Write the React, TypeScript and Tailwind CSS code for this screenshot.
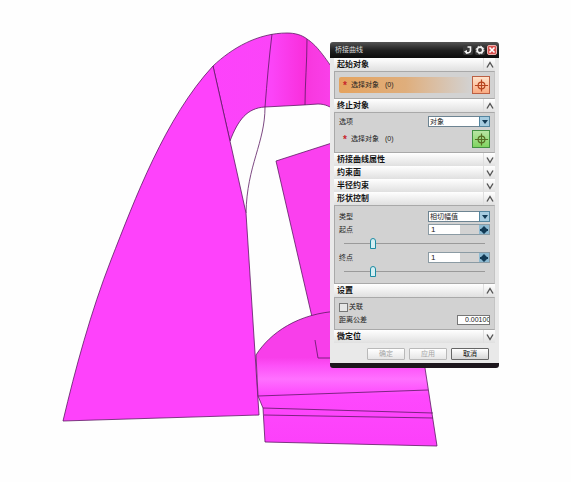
import type { ReactNode } from "react";

function ModelView() {
  return (
    <svg
      className="block h-[482px] w-[571px]"
      viewBox="0 0 571 482"
      strokeWidth="0.8"
      stroke="#5c1a62"
      fill="none"
      aria-hidden="true"
    >
      <defs>
        <linearGradient id="arch" x1="213" x2="330" y1="0" y2="0" gradientUnits="userSpaceOnUse">
          <stop offset="0" stopColor="#fd42fb" />
          <stop offset="0.5" stopColor="#fb44f8" />
          <stop offset="0.78" stopColor="#f92fdc" />
          <stop offset="0.84" stopColor="#f839e0" />
          <stop offset="1" stopColor="#fa3fe9" />
        </linearGradient>
        <linearGradient id="base" x1="0" x2="0" y1="312" y2="446" gradientUnits="userSpaceOnUse">
          <stop offset="0" stopColor="#f83eea" />
          <stop offset="0.34" stopColor="#f83eea" />
          <stop offset="0.4" stopColor="#fd50f8" />
          <stop offset="0.5" stopColor="#ff70ff" />
          <stop offset="0.62" stopColor="#fe48fd" />
          <stop offset="1" stopColor="#fc40fa" />
        </linearGradient>
      </defs>

      {/* curved strip over the top */}
      <path
        d="M213 66C232 48 258 33 287 33C295 33 302 35 307 39C316 45 322 53 335 72V109C329 107 326 104 318 104L303 105L265 107C247 108 238 120 230 141Z"
        fill="url(#arch)"
      />
      <path d="M272 34C269 58 267 82 265 107C265 143 247 165 246 213M307 39C307 62 305 84 305 105" />

      {/* left sheet */}
      <path d="M63 421C75 370 91 311 111 260C135 199 165 118 213 66L232 150L246 213L259 415Z" fill="#fe42fb" />

      {/* inner sheet and base */}
      <path d="M276 161L335 142V313L312 317Z" fill="#fb40ef" />
      <path
        d="M256 355C270 333 298 313 340 311H420L425 368L437 446L265 442L263 408L258 396Z"
        fill="url(#base)"
      />
      <path d="M315 340L318 358H335M258 396L428 390M263 408L433 413M264 415L433 418" />
    </svg>
  );
}

function Section({ title, open = false, children }: { title: string; open?: boolean; children?: ReactNode }) {
  return (
    <section>
      <button
        type="button"
        aria-expanded={open}
        className="flex h-[13px] w-full items-center justify-between bg-gradient-to-b from-white to-[#e0e0e0] pl-[3px] text-[8px] leading-[13px] font-bold text-[#151515]"
      >
        {title}
        <span className="flex h-full w-3 items-center justify-center border-l border-[#dedede]">
          <svg viewBox="0 0 8 8" className="h-2 w-2" fill="none" stroke="#555" strokeWidth="1.4">
            <path d={open ? "M1 6.5L4 1.5L7 6.5" : "M1 1.5L4 6.5L7 1.5"} />
          </svg>
        </span>
      </button>
      {open && <div className="border border-[#a9a9a9] border-r-[#c4c4c4] bg-[#d2d2d2] px-1">{children}</div>}
    </section>
  );
}

function TargetIcon({ color }: { color: string }) {
  return (
    <svg viewBox="0 0 16 16" className="h-[15px] w-[15px]" fill="none" stroke={color} strokeWidth="1.3">
      <path d="M8 1.5V14.5M1 8H15" />
      <circle cx="8" cy="8" r="3.6" />
    </svg>
  );
}

function PickRow({ active = false }: { active?: boolean }) {
  return (
    <div className="flex h-[18px] items-center justify-between">
      <div
        className={`flex h-4 flex-1 items-center gap-1 rounded-[2px] pl-1 ${
          active ? "bg-gradient-to-r from-[#e5a35e] via-[#dfae7c] to-[#d2d2d2]" : ""
        }`}
      >
        <span className="pt-[2px] text-[10px] leading-[10px] font-bold text-[#c8262c]">*</span>
        <span>选择对象</span>
        <span className="pl-[2px]">(0)</span>
      </div>
      <button
        type="button"
        aria-label="选择对象"
        className={`flex h-[18px] w-[18px] items-center justify-center border ${
          active
            ? "border-[#bb6044] bg-gradient-to-b from-[#ffe3cb] to-[#f9aa81]"
            : "border-[#439044] bg-gradient-to-b from-[#b8e5a2] to-[#7fd45f]"
        }`}
      >
        <TargetIcon color={active ? "#b8441f" : "#576f25"} />
      </button>
    </div>
  );
}

function SelectRow({ id, label, value }: { id: string; label: string; value: string }) {
  return (
    <div className="flex h-[13px] items-center justify-between">
      <label htmlFor={id}>{label}</label>
      <div className="relative w-[62px]">
        <select
          id={id}
          defaultValue={value}
          className="block h-[11px] w-full appearance-none border border-[#6d8492] bg-white pl-px text-[7px] leading-[9px]"
        >
          <option>{value}</option>
        </select>
        <span className="pointer-events-none absolute inset-y-0 right-0 flex w-[11px] items-center justify-center border border-[#53859f] bg-[#a6cce0]">
          <svg viewBox="0 0 6 4" className="h-1 w-[6px]">
            <path d="M0 0H6L3 4Z" fill="#123a55" />
          </svg>
        </span>
      </div>
    </div>
  );
}

function ValueRow({ id, label }: { id: string; label: string }) {
  return (
    <div>
      <div className="flex h-[13px] items-center justify-between">
        <label htmlFor={id}>{label}</label>
        <div className="flex h-[11px] w-[62px] border border-[#8b9ba4] bg-[#d2d2d2]">
          <input
            id={id}
            defaultValue="1"
            className="w-[31px] bg-white pl-[2px] text-[8px] leading-[9px]"
          />
          <button
            type="button"
            aria-label={`${label}步进`}
            className="ml-auto flex w-[10px] items-center justify-center bg-[#8dbad2]"
          >
            <svg viewBox="0 0 8 8" className="h-2 w-2" fill="#123a55">
              <path d="M4 0L7 3H8V5H7L4 8L1 5H0V3H1Z" />
            </svg>
          </button>
        </div>
      </div>
      <div className="flex h-[15px] items-center px-[5px]">
        <input
          type="range"
          aria-label={label}
          defaultValue={19}
          className="h-[11px] w-full appearance-none bg-transparent [&::-webkit-slider-runnable-track]:h-px [&::-webkit-slider-runnable-track]:bg-[#9a9a9a] [&::-webkit-slider-thumb]:-mt-[5px] [&::-webkit-slider-thumb]:h-[11px] [&::-webkit-slider-thumb]:w-[6px] [&::-webkit-slider-thumb]:appearance-none [&::-webkit-slider-thumb]:rounded-t-[3px] [&::-webkit-slider-thumb]:border [&::-webkit-slider-thumb]:border-[#1c8ba3] [&::-webkit-slider-thumb]:bg-[#d5eef2]"
        />
      </div>
    </div>
  );
}

function TitleBar() {
  return (
    <header className="flex h-4 items-center justify-between bg-gradient-to-b from-[#555] via-[#222] to-[#0d0d0d] pr-[2px] pl-[5px] text-[7px] text-[#ddd]">
      <h1>桥接曲线</h1>
      <div className="flex items-center gap-[2px]">
        <button type="button" aria-label="重置" className="flex h-[10px] w-[10px] items-center justify-center rounded-[2px] bg-[#3a3a3a]">
          <svg viewBox="0 0 10 10" className="h-[10px] w-[10px]" fill="none" stroke="#f4f4f4" strokeWidth="1.6">
            <path d="M4.5 2H7.5V5.5C7.5 7.5 5 8.5 3 7.5" />
            <path d="M1 6.5L4 5V9Z" fill="#f4f4f4" stroke="none" />
          </svg>
        </button>
        <button type="button" aria-label="选项" className="flex h-[10px] w-[10px] items-center justify-center rounded-[2px] bg-[#3a3a3a]">
          <svg viewBox="0 0 10 10" className="h-[10px] w-[10px]" fill="none" stroke="#f4f4f4">
            <circle cx="5" cy="5" r="2.8" strokeWidth="1.7" />
            <circle cx="5" cy="5" r="3.9" strokeWidth="1" strokeDasharray="1.5 1.56" />
          </svg>
        </button>
        <button type="button" aria-label="关闭" className="flex h-[10px] w-[10px] items-center justify-center rounded-[2px] border border-[#ecb0ac] bg-[#d6504e]">
          <svg viewBox="0 0 8 8" className="h-2 w-2" stroke="#fff" strokeWidth="1.6">
            <path d="M1.5 1.5L6.5 6.5M6.5 1.5L1.5 6.5" />
          </svg>
        </button>
      </div>
    </header>
  );
}

function DialogButton({ label, disabled = false }: { label: string; disabled?: boolean }) {
  return (
    <button
      type="button"
      disabled={disabled}
      className="flex h-3 w-[38px] items-center justify-center rounded-[1px] border border-[#666] bg-gradient-to-b from-white to-[#d6d6d6] text-[7px] leading-[10px] text-[#111] disabled:border-[#b9b9b9] disabled:to-[#e6e6e6] disabled:text-[#a5a5a5]"
    >
      {label}
    </button>
  );
}

export default function App() {
  return (
    <main className="relative min-h-screen overflow-hidden bg-[#fefefe] font-['Liberation_Sans','Noto_Sans_CJK_SC',sans-serif]">
      <ModelView />
      <div
        role="dialog"
        aria-label="桥接曲线"
        className="absolute top-[42px] left-[330px] w-[169px] overflow-hidden rounded-[3px] border-b-[5px] border-[#1d171d] bg-[#e9e9e9] text-[7px] leading-[10px] text-[#222]"
      >
        <TitleBar />
        <div className="px-1">
          <Section title="起始对象" open>
            <div className="py-1">
              <PickRow active />
            </div>
          </Section>
          <Section title="终止对象" open>
            <div className="space-y-[2px] pt-[2px] pb-1">
              <SelectRow id="option" label="选项" value="对象" />
              <PickRow />
            </div>
          </Section>
          <Section title="桥接曲线属性" />
          <Section title="约束面" />
          <Section title="半径约束" />
          <Section title="形状控制" open>
            <div className="py-1">
              <SelectRow id="type" label="类型" value="相切幅值" />
              <ValueRow id="start" label="起点" />
              <ValueRow id="end" label="终点" />
            </div>
          </Section>
          <Section title="设置" open>
            <div className="py-[3px]">
              <label className="flex h-3 items-center gap-px">
                <input type="checkbox" className="h-[9px] w-[9px] appearance-none border border-[#777] bg-[#e6e6e6]" />
                关联
              </label>
              <div className="flex h-[13px] items-center justify-between">
                <label htmlFor="tolerance">距离公差</label>
                <input
                  id="tolerance"
                  defaultValue="0.00100"
                  className="h-[10px] w-[33px] border border-[#777] bg-white pl-[7px] text-[7px] leading-2"
                />
              </div>
            </div>
          </Section>
          <Section title="微定位" />
        </div>
        <footer className="flex justify-end gap-1 px-[10px] pt-[5px] pb-[3px]">
          <DialogButton label="确定" disabled />
          <DialogButton label="应用" disabled />
          <DialogButton label="取消" />
        </footer>
      </div>
    </main>
  );
}
